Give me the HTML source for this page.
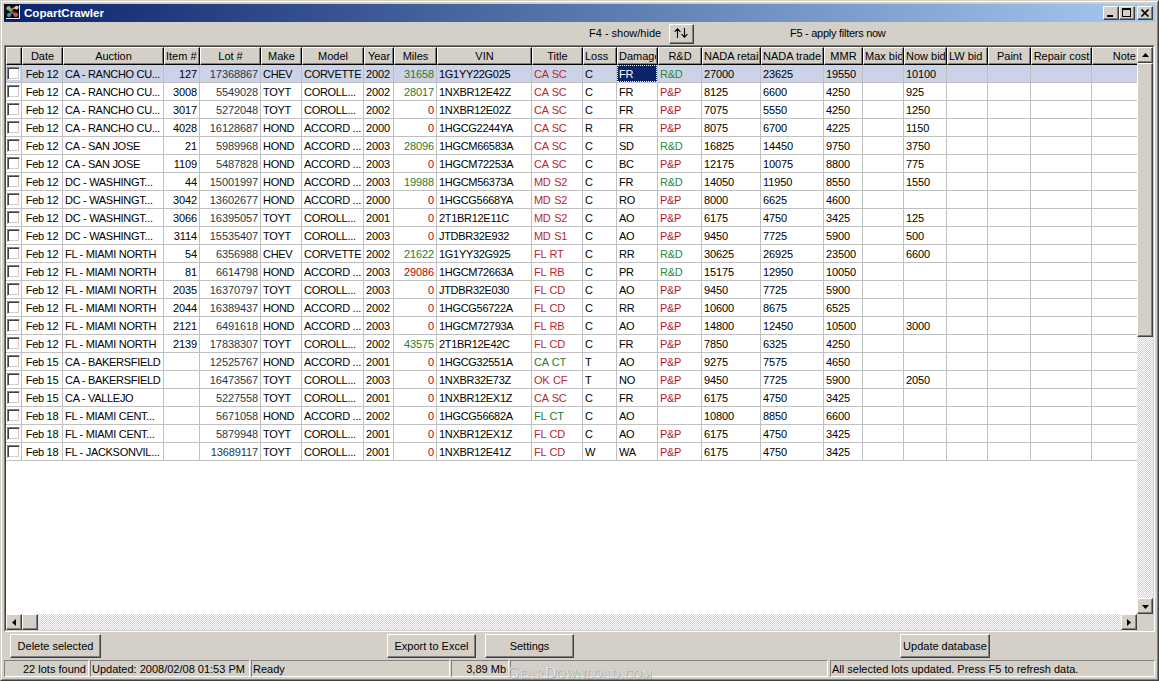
<!DOCTYPE html>
<html><head><meta charset="utf-8"><style>
*{margin:0;padding:0;box-sizing:border-box}
html,body{width:1159px;height:681px;overflow:hidden;background:#d4d0c8;font-family:"Liberation Sans",sans-serif;font-size:11px;color:#000}
.a{position:absolute}
.t{position:absolute;white-space:pre;line-height:17px;height:17px;overflow:hidden}
.wm{filter:none}
.g{letter-spacing:-0.3px}
.n{letter-spacing:-0.1px}
.hl{position:absolute;background:#c0c0c0}
.btn{position:absolute;background:#d4d0c8;border-top:1px solid #fff;border-left:1px solid #fff;border-right:1px solid #404040;border-bottom:1px solid #404040;box-shadow:inset -1px -1px 0 #808080}
.pnl{position:absolute;border-top:1px solid #808080;border-left:1px solid #808080;border-right:1px solid #fff;border-bottom:1px solid #fff}
.cb{position:absolute;width:13px;height:13px;background:#fff;border-top:1px solid #808080;border-left:1px solid #808080;border-right:1px solid #fff;border-bottom:1px solid #fff;box-shadow:inset 1px 1px 0 #404040, inset -1px -1px 0 #d4d0c8}
.dither{background-color:#fff;background-image:linear-gradient(45deg,#d4d0c8 25%,transparent 25%,transparent 75%,#d4d0c8 75%),linear-gradient(45deg,#d4d0c8 25%,transparent 25%,transparent 75%,#d4d0c8 75%);background-size:2px 2px;background-position:0 0,1px 1px}
</style></head><body>
<svg width="0" height="0" style="position:absolute"><filter id="crisp" x="0" y="0" width="100%" height="100%" color-interpolation-filters="sRGB"><feComponentTransfer><feFuncA type="discrete" tableValues="0 1 1 1"/></feComponentTransfer></filter></svg>

<div class="a" style="left:0;top:0;width:1159px;height:681px;border-top:1px solid #d4d0c8;border-left:1px solid #d4d0c8;border-right:1px solid #404040;border-bottom:1px solid #404040"></div>
<div class="a" style="left:1px;top:1px;width:1157px;height:679px;border-top:1px solid #fff;border-left:1px solid #fff;border-right:1px solid #808080;border-bottom:1px solid #808080"></div>
<div class="a" style="left:4px;top:4px;width:1151px;height:18px;background:linear-gradient(to right,#0a246a,#a6caf0)"></div>
<svg class="a" style="left:4px;top:4px" width="16" height="16" viewBox="0 0 16 16">
<rect x="0" y="0" width="16" height="16" fill="#0c1238"/>
<rect x="2" y="1" width="13" height="13" fill="#0a0a14"/>
<path d="M4.6 4.2 L8.3 8.2" stroke="#4a9a3a" stroke-width="2.2" stroke-linecap="round"/>
<path d="M8.3 8.2 L4.8 11" stroke="#3a7a9a" stroke-width="2.2" stroke-linecap="round"/>
<path d="M8.3 8.2 L11.6 10.8" stroke="#b04838" stroke-width="2.2" stroke-linecap="round"/>
<path d="M6.2 6.6 Q9.5 3.5 12.4 4" stroke="#d8904a" stroke-width="1.8" fill="none" stroke-linecap="round"/>
<circle cx="4.6" cy="4.2" r="2.2" fill="#80c070"/>
<circle cx="12.6" cy="3.6" r="1.9" fill="#e8cdb0"/>
<circle cx="5" cy="11" r="2.1" fill="#4a98b8"/>
<circle cx="11.8" cy="10.8" r="2.3" fill="#c86050"/>
<path d="M2 14.5 H15.5 V1" stroke="#f4f0ff" stroke-width="1" fill="none"/>
</svg>
<div class="t" style="left:24px;top:4px;height:18px;line-height:18px;color:#fff;font-weight:bold;font-size:11.6px">CopartCrawler</div>
<div class="btn" style="left:1103px;top:6px;width:16px;height:14px"><div class="a" style="left:3px;top:8px;width:6px;height:2px;background:#000"></div></div>
<div class="btn" style="left:1119px;top:6px;width:16px;height:14px"><div class="a" style="left:2px;top:1px;width:9px;height:9px;border:1px solid #000;border-top-width:2px"></div></div>
<div class="btn" style="left:1137px;top:6px;width:16px;height:14px"><svg class="a" style="left:3px;top:2px" width="9" height="8" viewBox="0 0 9 8"><path d="M0.5 0.5 L7.5 7.5 M7.5 0.5 L0.5 7.5" stroke="#000" stroke-width="1.6"/></svg></div>
<div class="t" style="left:589px;top:25px">F4 - show/hide</div>
<div class="btn" style="left:669px;top:24px;width:25px;height:20px"><svg class="a" style="left:4px;top:3px" width="15" height="11" viewBox="0 0 15 11"><path d="M3.5 10 V0.8 M0.6 3.8 L3.5 0.9 L6.4 3.8 M10.5 0 V9.2 M7.6 6.2 L10.5 9.1 L13.4 6.2" stroke="#000" stroke-width="1.1" fill="none"/></svg></div>
<div class="t" style="left:790px;top:25px;letter-spacing:-0.27px">F5 - apply filters now</div>
<div class="a" style="left:4px;top:45px;width:1151px;height:587px;border-top:1px solid #808080;border-left:1px solid #808080;border-right:1px solid #fff;border-bottom:1px solid #fff"></div>
<div class="a" style="left:5px;top:46px;width:1149px;height:585px;background:#fff;border-top:1px solid #404040;border-left:1px solid #404040;border-right:1px solid #d4d0c8;border-bottom:1px solid #d4d0c8;overflow:hidden">
<div class="a" style="left:0px;top:0px;width:16px;height:18px;background:#d4d0c8;border-top:1px solid #fff;border-left:1px solid #fff;border-right:1px solid #000;border-bottom:1px solid #000;box-shadow:inset -1px -1px 0 #808080"></div>
<div class="a" style="left:16px;top:0px;width:41px;height:18px;background:#d4d0c8;border-top:1px solid #fff;border-left:1px solid #fff;border-right:1px solid #000;border-bottom:1px solid #000;box-shadow:inset -1px -1px 0 #808080"></div>
<div class="t" style="left:16px;top:1px;width:41px;text-align:center">Date</div>
<div class="a" style="left:57px;top:0px;width:101px;height:18px;background:#d4d0c8;border-top:1px solid #fff;border-left:1px solid #fff;border-right:1px solid #000;border-bottom:1px solid #000;box-shadow:inset -1px -1px 0 #808080"></div>
<div class="t" style="left:57px;top:1px;width:101px;text-align:center">Auction</div>
<div class="a" style="left:158px;top:0px;width:36px;height:18px;background:#d4d0c8;border-top:1px solid #fff;border-left:1px solid #fff;border-right:1px solid #000;border-bottom:1px solid #000;box-shadow:inset -1px -1px 0 #808080"></div>
<div class="t" style="left:160px;top:1px;width:32px">Item #</div>
<div class="a" style="left:194px;top:0px;width:61px;height:18px;background:#d4d0c8;border-top:1px solid #fff;border-left:1px solid #fff;border-right:1px solid #000;border-bottom:1px solid #000;box-shadow:inset -1px -1px 0 #808080"></div>
<div class="t" style="left:194px;top:1px;width:61px;text-align:center">Lot #</div>
<div class="a" style="left:255px;top:0px;width:41px;height:18px;background:#d4d0c8;border-top:1px solid #fff;border-left:1px solid #fff;border-right:1px solid #000;border-bottom:1px solid #000;box-shadow:inset -1px -1px 0 #808080"></div>
<div class="t" style="left:255px;top:1px;width:41px;text-align:center">Make</div>
<div class="a" style="left:296px;top:0px;width:62px;height:18px;background:#d4d0c8;border-top:1px solid #fff;border-left:1px solid #fff;border-right:1px solid #000;border-bottom:1px solid #000;box-shadow:inset -1px -1px 0 #808080"></div>
<div class="t" style="left:296px;top:1px;width:62px;text-align:center">Model</div>
<div class="a" style="left:358px;top:0px;width:30px;height:18px;background:#d4d0c8;border-top:1px solid #fff;border-left:1px solid #fff;border-right:1px solid #000;border-bottom:1px solid #000;box-shadow:inset -1px -1px 0 #808080"></div>
<div class="t" style="left:358px;top:1px;width:30px;text-align:center">Year</div>
<div class="a" style="left:388px;top:0px;width:43px;height:18px;background:#d4d0c8;border-top:1px solid #fff;border-left:1px solid #fff;border-right:1px solid #000;border-bottom:1px solid #000;box-shadow:inset -1px -1px 0 #808080"></div>
<div class="t" style="left:388px;top:1px;width:43px;text-align:center">Miles</div>
<div class="a" style="left:431px;top:0px;width:95px;height:18px;background:#d4d0c8;border-top:1px solid #fff;border-left:1px solid #fff;border-right:1px solid #000;border-bottom:1px solid #000;box-shadow:inset -1px -1px 0 #808080"></div>
<div class="t" style="left:431px;top:1px;width:95px;text-align:center">VIN</div>
<div class="a" style="left:526px;top:0px;width:51px;height:18px;background:#d4d0c8;border-top:1px solid #fff;border-left:1px solid #fff;border-right:1px solid #000;border-bottom:1px solid #000;box-shadow:inset -1px -1px 0 #808080"></div>
<div class="t" style="left:526px;top:1px;width:51px;text-align:center">Title</div>
<div class="a" style="left:577px;top:0px;width:34px;height:18px;background:#d4d0c8;border-top:1px solid #fff;border-left:1px solid #fff;border-right:1px solid #000;border-bottom:1px solid #000;box-shadow:inset -1px -1px 0 #808080"></div>
<div class="t" style="left:579px;top:1px;width:30px">Loss</div>
<div class="a" style="left:611px;top:0px;width:41px;height:18px;background:#d4d0c8;border-top:1px solid #fff;border-left:1px solid #fff;border-right:1px solid #000;border-bottom:1px solid #000;box-shadow:inset -1px -1px 0 #808080"></div>
<div class="t" style="left:613px;top:1px;width:37px">Damage</div>
<div class="a" style="left:652px;top:0px;width:44px;height:18px;background:#d4d0c8;border-top:1px solid #fff;border-left:1px solid #fff;border-right:1px solid #000;border-bottom:1px solid #000;box-shadow:inset -1px -1px 0 #808080"></div>
<div class="t" style="left:652px;top:1px;width:44px;text-align:center">R&amp;D</div>
<div class="a" style="left:696px;top:0px;width:59px;height:18px;background:#d4d0c8;border-top:1px solid #fff;border-left:1px solid #fff;border-right:1px solid #000;border-bottom:1px solid #000;box-shadow:inset -1px -1px 0 #808080"></div>
<div class="t" style="left:698px;top:1px;width:55px">NADA retail</div>
<div class="a" style="left:755px;top:0px;width:63px;height:18px;background:#d4d0c8;border-top:1px solid #fff;border-left:1px solid #fff;border-right:1px solid #000;border-bottom:1px solid #000;box-shadow:inset -1px -1px 0 #808080"></div>
<div class="t" style="left:757px;top:1px;width:59px">NADA trade</div>
<div class="a" style="left:818px;top:0px;width:39px;height:18px;background:#d4d0c8;border-top:1px solid #fff;border-left:1px solid #fff;border-right:1px solid #000;border-bottom:1px solid #000;box-shadow:inset -1px -1px 0 #808080"></div>
<div class="t" style="left:818px;top:1px;width:39px;text-align:center">MMR</div>
<div class="a" style="left:857px;top:0px;width:41px;height:18px;background:#d4d0c8;border-top:1px solid #fff;border-left:1px solid #fff;border-right:1px solid #000;border-bottom:1px solid #000;box-shadow:inset -1px -1px 0 #808080"></div>
<div class="t" style="left:859px;top:1px;width:37px">Max bid</div>
<div class="a" style="left:898px;top:0px;width:43px;height:18px;background:#d4d0c8;border-top:1px solid #fff;border-left:1px solid #fff;border-right:1px solid #000;border-bottom:1px solid #000;box-shadow:inset -1px -1px 0 #808080"></div>
<div class="t" style="left:900px;top:1px;width:39px">Now bid</div>
<div class="a" style="left:941px;top:0px;width:41px;height:18px;background:#d4d0c8;border-top:1px solid #fff;border-left:1px solid #fff;border-right:1px solid #000;border-bottom:1px solid #000;box-shadow:inset -1px -1px 0 #808080"></div>
<div class="t" style="left:943px;top:1px;width:37px">LW bid</div>
<div class="a" style="left:982px;top:0px;width:43px;height:18px;background:#d4d0c8;border-top:1px solid #fff;border-left:1px solid #fff;border-right:1px solid #000;border-bottom:1px solid #000;box-shadow:inset -1px -1px 0 #808080"></div>
<div class="t" style="left:982px;top:1px;width:43px;text-align:center">Paint</div>
<div class="a" style="left:1025px;top:0px;width:61px;height:18px;background:#d4d0c8;border-top:1px solid #fff;border-left:1px solid #fff;border-right:1px solid #000;border-bottom:1px solid #000;box-shadow:inset -1px -1px 0 #808080"></div>
<div class="t" style="left:1025px;top:1px;width:61px;text-align:center">Repair cost</div>
<div class="a" style="left:1086px;top:0px;width:79px;height:18px;background:#d4d0c8;border-top:1px solid #fff;border-left:1px solid #fff;border-right:1px solid #000;border-bottom:1px solid #000;box-shadow:inset -1px -1px 0 #808080"></div>
<div class="t" style="left:1086px;top:1px;width:44px;text-align:right">Note</div>
<div class="a" style="left:0px;top:18px;width:1131px;height:17px;background:#cdd3e6"></div>
<div class="hl" style="left:0px;top:35px;width:1131px;height:1px"></div>
<div class="cb" style="left:1px;top:20px"></div>
<div class="t g" style="left:16px;top:19px;width:40px;text-align:center;">Feb 12</div>
<div class="t g" style="left:59px;top:19px;width:98px;">CA - RANCHO CU...</div>
<div class="t n" style="left:158px;top:19px;width:33px;text-align:right;">127</div>
<div class="t n" style="left:194px;top:19px;width:58px;text-align:right;color:#183c4c;">17368867</div>
<div class="t g" style="left:257px;top:19px;width:38px;">CHEV</div>
<div class="t g" style="left:298px;top:19px;width:59px;">CORVETTE</div>
<div class="t n" style="left:360px;top:19px;width:27px;">2002</div>
<div class="t n" style="left:388px;top:19px;width:40px;text-align:right;color:#287a30;">31658</div>
<div class="t g" style="left:433px;top:19px;width:92px;">1G1YY22G025</div>
<div class="t g" style="left:528px;top:19px;width:48px;color:#b82830;word-spacing:1px;">CA SC</div>
<div class="t g" style="left:579px;top:19px;width:31px;">C</div>
<div class="a" style="left:611px;top:18px;width:40px;height:17px;background:#0a246a;outline:1px dotted #fff;outline-offset:-1px"></div>
<div class="t g" style="left:613px;top:19px;width:38px;color:#fff;">FR</div>
<div class="t g" style="left:654px;top:19px;width:41px;color:#2a8a3a;">R&amp;D</div>
<div class="t n" style="left:698px;top:19px;width:56px;">27000</div>
<div class="t n" style="left:757px;top:19px;width:60px;">23625</div>
<div class="t n" style="left:820px;top:19px;width:36px;">19550</div>
<div class="t n" style="left:900px;top:19px;width:40px;">10100</div>
<div class="hl" style="left:0px;top:53px;width:1131px;height:1px"></div>
<div class="cb" style="left:1px;top:38px"></div>
<div class="t g" style="left:16px;top:37px;width:40px;text-align:center;">Feb 12</div>
<div class="t g" style="left:59px;top:37px;width:98px;">CA - RANCHO CU...</div>
<div class="t n" style="left:158px;top:37px;width:33px;text-align:right;">3008</div>
<div class="t n" style="left:194px;top:37px;width:58px;text-align:right;color:#183c4c;">5549028</div>
<div class="t g" style="left:257px;top:37px;width:38px;">TOYT</div>
<div class="t g" style="left:298px;top:37px;width:59px;">COROLL...</div>
<div class="t n" style="left:360px;top:37px;width:27px;">2002</div>
<div class="t n" style="left:388px;top:37px;width:40px;text-align:right;color:#287a30;">28017</div>
<div class="t g" style="left:433px;top:37px;width:92px;">1NXBR12E42Z</div>
<div class="t g" style="left:528px;top:37px;width:48px;color:#b82830;word-spacing:1px;">CA SC</div>
<div class="t g" style="left:579px;top:37px;width:31px;">C</div>
<div class="t g" style="left:613px;top:37px;width:38px;">FR</div>
<div class="t g" style="left:654px;top:37px;width:41px;color:#b01828;">P&amp;P</div>
<div class="t n" style="left:698px;top:37px;width:56px;">8125</div>
<div class="t n" style="left:757px;top:37px;width:60px;">6600</div>
<div class="t n" style="left:820px;top:37px;width:36px;">4250</div>
<div class="t n" style="left:900px;top:37px;width:40px;">925</div>
<div class="hl" style="left:0px;top:71px;width:1131px;height:1px"></div>
<div class="cb" style="left:1px;top:56px"></div>
<div class="t g" style="left:16px;top:55px;width:40px;text-align:center;">Feb 12</div>
<div class="t g" style="left:59px;top:55px;width:98px;">CA - RANCHO CU...</div>
<div class="t n" style="left:158px;top:55px;width:33px;text-align:right;">3017</div>
<div class="t n" style="left:194px;top:55px;width:58px;text-align:right;color:#183c4c;">5272048</div>
<div class="t g" style="left:257px;top:55px;width:38px;">TOYT</div>
<div class="t g" style="left:298px;top:55px;width:59px;">COROLL...</div>
<div class="t n" style="left:360px;top:55px;width:27px;">2002</div>
<div class="t n" style="left:388px;top:55px;width:40px;text-align:right;color:#c00000;">0</div>
<div class="t g" style="left:433px;top:55px;width:92px;">1NXBR12E02Z</div>
<div class="t g" style="left:528px;top:55px;width:48px;color:#b82830;word-spacing:1px;">CA SC</div>
<div class="t g" style="left:579px;top:55px;width:31px;">C</div>
<div class="t g" style="left:613px;top:55px;width:38px;">FR</div>
<div class="t g" style="left:654px;top:55px;width:41px;color:#b01828;">P&amp;P</div>
<div class="t n" style="left:698px;top:55px;width:56px;">7075</div>
<div class="t n" style="left:757px;top:55px;width:60px;">5550</div>
<div class="t n" style="left:820px;top:55px;width:36px;">4250</div>
<div class="t n" style="left:900px;top:55px;width:40px;">1250</div>
<div class="hl" style="left:0px;top:89px;width:1131px;height:1px"></div>
<div class="cb" style="left:1px;top:74px"></div>
<div class="t g" style="left:16px;top:73px;width:40px;text-align:center;">Feb 12</div>
<div class="t g" style="left:59px;top:73px;width:98px;">CA - RANCHO CU...</div>
<div class="t n" style="left:158px;top:73px;width:33px;text-align:right;">4028</div>
<div class="t n" style="left:194px;top:73px;width:58px;text-align:right;color:#183c4c;">16128687</div>
<div class="t g" style="left:257px;top:73px;width:38px;">HOND</div>
<div class="t g" style="left:298px;top:73px;width:59px;">ACCORD ...</div>
<div class="t n" style="left:360px;top:73px;width:27px;">2000</div>
<div class="t n" style="left:388px;top:73px;width:40px;text-align:right;color:#c00000;">0</div>
<div class="t g" style="left:433px;top:73px;width:92px;">1HGCG2244YA</div>
<div class="t g" style="left:528px;top:73px;width:48px;color:#b82830;word-spacing:1px;">CA SC</div>
<div class="t g" style="left:579px;top:73px;width:31px;">R</div>
<div class="t g" style="left:613px;top:73px;width:38px;">FR</div>
<div class="t g" style="left:654px;top:73px;width:41px;color:#b01828;">P&amp;P</div>
<div class="t n" style="left:698px;top:73px;width:56px;">8075</div>
<div class="t n" style="left:757px;top:73px;width:60px;">6700</div>
<div class="t n" style="left:820px;top:73px;width:36px;">4225</div>
<div class="t n" style="left:900px;top:73px;width:40px;">1150</div>
<div class="hl" style="left:0px;top:107px;width:1131px;height:1px"></div>
<div class="cb" style="left:1px;top:92px"></div>
<div class="t g" style="left:16px;top:91px;width:40px;text-align:center;">Feb 12</div>
<div class="t g" style="left:59px;top:91px;width:98px;">CA - SAN JOSE</div>
<div class="t n" style="left:158px;top:91px;width:33px;text-align:right;">21</div>
<div class="t n" style="left:194px;top:91px;width:58px;text-align:right;color:#183c4c;">5989968</div>
<div class="t g" style="left:257px;top:91px;width:38px;">HOND</div>
<div class="t g" style="left:298px;top:91px;width:59px;">ACCORD ...</div>
<div class="t n" style="left:360px;top:91px;width:27px;">2003</div>
<div class="t n" style="left:388px;top:91px;width:40px;text-align:right;color:#287a30;">28096</div>
<div class="t g" style="left:433px;top:91px;width:92px;">1HGCM66583A</div>
<div class="t g" style="left:528px;top:91px;width:48px;color:#b82830;word-spacing:1px;">CA SC</div>
<div class="t g" style="left:579px;top:91px;width:31px;">C</div>
<div class="t g" style="left:613px;top:91px;width:38px;">SD</div>
<div class="t g" style="left:654px;top:91px;width:41px;color:#2a8a3a;">R&amp;D</div>
<div class="t n" style="left:698px;top:91px;width:56px;">16825</div>
<div class="t n" style="left:757px;top:91px;width:60px;">14450</div>
<div class="t n" style="left:820px;top:91px;width:36px;">9750</div>
<div class="t n" style="left:900px;top:91px;width:40px;">3750</div>
<div class="hl" style="left:0px;top:125px;width:1131px;height:1px"></div>
<div class="cb" style="left:1px;top:110px"></div>
<div class="t g" style="left:16px;top:109px;width:40px;text-align:center;">Feb 12</div>
<div class="t g" style="left:59px;top:109px;width:98px;">CA - SAN JOSE</div>
<div class="t n" style="left:158px;top:109px;width:33px;text-align:right;">1109</div>
<div class="t n" style="left:194px;top:109px;width:58px;text-align:right;color:#183c4c;">5487828</div>
<div class="t g" style="left:257px;top:109px;width:38px;">HOND</div>
<div class="t g" style="left:298px;top:109px;width:59px;">ACCORD ...</div>
<div class="t n" style="left:360px;top:109px;width:27px;">2003</div>
<div class="t n" style="left:388px;top:109px;width:40px;text-align:right;color:#c00000;">0</div>
<div class="t g" style="left:433px;top:109px;width:92px;">1HGCM72253A</div>
<div class="t g" style="left:528px;top:109px;width:48px;color:#b82830;word-spacing:1px;">CA SC</div>
<div class="t g" style="left:579px;top:109px;width:31px;">C</div>
<div class="t g" style="left:613px;top:109px;width:38px;">BC</div>
<div class="t g" style="left:654px;top:109px;width:41px;color:#b01828;">P&amp;P</div>
<div class="t n" style="left:698px;top:109px;width:56px;">12175</div>
<div class="t n" style="left:757px;top:109px;width:60px;">10075</div>
<div class="t n" style="left:820px;top:109px;width:36px;">8800</div>
<div class="t n" style="left:900px;top:109px;width:40px;">775</div>
<div class="hl" style="left:0px;top:143px;width:1131px;height:1px"></div>
<div class="cb" style="left:1px;top:128px"></div>
<div class="t g" style="left:16px;top:127px;width:40px;text-align:center;">Feb 12</div>
<div class="t g" style="left:59px;top:127px;width:98px;">DC - WASHINGT...</div>
<div class="t n" style="left:158px;top:127px;width:33px;text-align:right;">44</div>
<div class="t n" style="left:194px;top:127px;width:58px;text-align:right;color:#183c4c;">15001997</div>
<div class="t g" style="left:257px;top:127px;width:38px;">HOND</div>
<div class="t g" style="left:298px;top:127px;width:59px;">ACCORD ...</div>
<div class="t n" style="left:360px;top:127px;width:27px;">2003</div>
<div class="t n" style="left:388px;top:127px;width:40px;text-align:right;color:#287a30;">19988</div>
<div class="t g" style="left:433px;top:127px;width:92px;">1HGCM56373A</div>
<div class="t g" style="left:528px;top:127px;width:48px;color:#b82830;word-spacing:1px;">MD S2</div>
<div class="t g" style="left:579px;top:127px;width:31px;">C</div>
<div class="t g" style="left:613px;top:127px;width:38px;">FR</div>
<div class="t g" style="left:654px;top:127px;width:41px;color:#2a8a3a;">R&amp;D</div>
<div class="t n" style="left:698px;top:127px;width:56px;">14050</div>
<div class="t n" style="left:757px;top:127px;width:60px;">11950</div>
<div class="t n" style="left:820px;top:127px;width:36px;">8550</div>
<div class="t n" style="left:900px;top:127px;width:40px;">1550</div>
<div class="hl" style="left:0px;top:161px;width:1131px;height:1px"></div>
<div class="cb" style="left:1px;top:146px"></div>
<div class="t g" style="left:16px;top:145px;width:40px;text-align:center;">Feb 12</div>
<div class="t g" style="left:59px;top:145px;width:98px;">DC - WASHINGT...</div>
<div class="t n" style="left:158px;top:145px;width:33px;text-align:right;">3042</div>
<div class="t n" style="left:194px;top:145px;width:58px;text-align:right;color:#183c4c;">13602677</div>
<div class="t g" style="left:257px;top:145px;width:38px;">HOND</div>
<div class="t g" style="left:298px;top:145px;width:59px;">ACCORD ...</div>
<div class="t n" style="left:360px;top:145px;width:27px;">2000</div>
<div class="t n" style="left:388px;top:145px;width:40px;text-align:right;color:#c00000;">0</div>
<div class="t g" style="left:433px;top:145px;width:92px;">1HGCG5668YA</div>
<div class="t g" style="left:528px;top:145px;width:48px;color:#b82830;word-spacing:1px;">MD S2</div>
<div class="t g" style="left:579px;top:145px;width:31px;">C</div>
<div class="t g" style="left:613px;top:145px;width:38px;">RO</div>
<div class="t g" style="left:654px;top:145px;width:41px;color:#b01828;">P&amp;P</div>
<div class="t n" style="left:698px;top:145px;width:56px;">8000</div>
<div class="t n" style="left:757px;top:145px;width:60px;">6625</div>
<div class="t n" style="left:820px;top:145px;width:36px;">4600</div>
<div class="hl" style="left:0px;top:179px;width:1131px;height:1px"></div>
<div class="cb" style="left:1px;top:164px"></div>
<div class="t g" style="left:16px;top:163px;width:40px;text-align:center;">Feb 12</div>
<div class="t g" style="left:59px;top:163px;width:98px;">DC - WASHINGT...</div>
<div class="t n" style="left:158px;top:163px;width:33px;text-align:right;">3066</div>
<div class="t n" style="left:194px;top:163px;width:58px;text-align:right;color:#183c4c;">16395057</div>
<div class="t g" style="left:257px;top:163px;width:38px;">TOYT</div>
<div class="t g" style="left:298px;top:163px;width:59px;">COROLL...</div>
<div class="t n" style="left:360px;top:163px;width:27px;">2001</div>
<div class="t n" style="left:388px;top:163px;width:40px;text-align:right;color:#c00000;">0</div>
<div class="t g" style="left:433px;top:163px;width:92px;">2T1BR12E11C</div>
<div class="t g" style="left:528px;top:163px;width:48px;color:#b82830;word-spacing:1px;">MD S2</div>
<div class="t g" style="left:579px;top:163px;width:31px;">C</div>
<div class="t g" style="left:613px;top:163px;width:38px;">AO</div>
<div class="t g" style="left:654px;top:163px;width:41px;color:#b01828;">P&amp;P</div>
<div class="t n" style="left:698px;top:163px;width:56px;">6175</div>
<div class="t n" style="left:757px;top:163px;width:60px;">4750</div>
<div class="t n" style="left:820px;top:163px;width:36px;">3425</div>
<div class="t n" style="left:900px;top:163px;width:40px;">125</div>
<div class="hl" style="left:0px;top:197px;width:1131px;height:1px"></div>
<div class="cb" style="left:1px;top:182px"></div>
<div class="t g" style="left:16px;top:181px;width:40px;text-align:center;">Feb 12</div>
<div class="t g" style="left:59px;top:181px;width:98px;">DC - WASHINGT...</div>
<div class="t n" style="left:158px;top:181px;width:33px;text-align:right;">3114</div>
<div class="t n" style="left:194px;top:181px;width:58px;text-align:right;color:#183c4c;">15535407</div>
<div class="t g" style="left:257px;top:181px;width:38px;">TOYT</div>
<div class="t g" style="left:298px;top:181px;width:59px;">COROLL...</div>
<div class="t n" style="left:360px;top:181px;width:27px;">2003</div>
<div class="t n" style="left:388px;top:181px;width:40px;text-align:right;color:#c00000;">0</div>
<div class="t g" style="left:433px;top:181px;width:92px;">JTDBR32E932</div>
<div class="t g" style="left:528px;top:181px;width:48px;color:#b82830;word-spacing:1px;">MD S1</div>
<div class="t g" style="left:579px;top:181px;width:31px;">C</div>
<div class="t g" style="left:613px;top:181px;width:38px;">AO</div>
<div class="t g" style="left:654px;top:181px;width:41px;color:#b01828;">P&amp;P</div>
<div class="t n" style="left:698px;top:181px;width:56px;">9450</div>
<div class="t n" style="left:757px;top:181px;width:60px;">7725</div>
<div class="t n" style="left:820px;top:181px;width:36px;">5900</div>
<div class="t n" style="left:900px;top:181px;width:40px;">500</div>
<div class="hl" style="left:0px;top:215px;width:1131px;height:1px"></div>
<div class="cb" style="left:1px;top:200px"></div>
<div class="t g" style="left:16px;top:199px;width:40px;text-align:center;">Feb 12</div>
<div class="t g" style="left:59px;top:199px;width:98px;">FL - MIAMI NORTH</div>
<div class="t n" style="left:158px;top:199px;width:33px;text-align:right;">54</div>
<div class="t n" style="left:194px;top:199px;width:58px;text-align:right;color:#183c4c;">6356988</div>
<div class="t g" style="left:257px;top:199px;width:38px;">CHEV</div>
<div class="t g" style="left:298px;top:199px;width:59px;">CORVETTE</div>
<div class="t n" style="left:360px;top:199px;width:27px;">2002</div>
<div class="t n" style="left:388px;top:199px;width:40px;text-align:right;color:#287a30;">21622</div>
<div class="t g" style="left:433px;top:199px;width:92px;">1G1YY32G925</div>
<div class="t g" style="left:528px;top:199px;width:48px;color:#b82830;word-spacing:1px;">FL RT</div>
<div class="t g" style="left:579px;top:199px;width:31px;">C</div>
<div class="t g" style="left:613px;top:199px;width:38px;">RR</div>
<div class="t g" style="left:654px;top:199px;width:41px;color:#2a8a3a;">R&amp;D</div>
<div class="t n" style="left:698px;top:199px;width:56px;">30625</div>
<div class="t n" style="left:757px;top:199px;width:60px;">26925</div>
<div class="t n" style="left:820px;top:199px;width:36px;">23500</div>
<div class="t n" style="left:900px;top:199px;width:40px;">6600</div>
<div class="hl" style="left:0px;top:233px;width:1131px;height:1px"></div>
<div class="cb" style="left:1px;top:218px"></div>
<div class="t g" style="left:16px;top:217px;width:40px;text-align:center;">Feb 12</div>
<div class="t g" style="left:59px;top:217px;width:98px;">FL - MIAMI NORTH</div>
<div class="t n" style="left:158px;top:217px;width:33px;text-align:right;">81</div>
<div class="t n" style="left:194px;top:217px;width:58px;text-align:right;color:#183c4c;">6614798</div>
<div class="t g" style="left:257px;top:217px;width:38px;">HOND</div>
<div class="t g" style="left:298px;top:217px;width:59px;">ACCORD ...</div>
<div class="t n" style="left:360px;top:217px;width:27px;">2003</div>
<div class="t n" style="left:388px;top:217px;width:40px;text-align:right;color:#c00000;">29086</div>
<div class="t g" style="left:433px;top:217px;width:92px;">1HGCM72663A</div>
<div class="t g" style="left:528px;top:217px;width:48px;color:#b82830;word-spacing:1px;">FL RB</div>
<div class="t g" style="left:579px;top:217px;width:31px;">C</div>
<div class="t g" style="left:613px;top:217px;width:38px;">PR</div>
<div class="t g" style="left:654px;top:217px;width:41px;color:#2a8a3a;">R&amp;D</div>
<div class="t n" style="left:698px;top:217px;width:56px;">15175</div>
<div class="t n" style="left:757px;top:217px;width:60px;">12950</div>
<div class="t n" style="left:820px;top:217px;width:36px;">10050</div>
<div class="hl" style="left:0px;top:251px;width:1131px;height:1px"></div>
<div class="cb" style="left:1px;top:236px"></div>
<div class="t g" style="left:16px;top:235px;width:40px;text-align:center;">Feb 12</div>
<div class="t g" style="left:59px;top:235px;width:98px;">FL - MIAMI NORTH</div>
<div class="t n" style="left:158px;top:235px;width:33px;text-align:right;">2035</div>
<div class="t n" style="left:194px;top:235px;width:58px;text-align:right;color:#183c4c;">16370797</div>
<div class="t g" style="left:257px;top:235px;width:38px;">TOYT</div>
<div class="t g" style="left:298px;top:235px;width:59px;">COROLL...</div>
<div class="t n" style="left:360px;top:235px;width:27px;">2003</div>
<div class="t n" style="left:388px;top:235px;width:40px;text-align:right;color:#c00000;">0</div>
<div class="t g" style="left:433px;top:235px;width:92px;">JTDBR32E030</div>
<div class="t g" style="left:528px;top:235px;width:48px;color:#b82830;word-spacing:1px;">FL CD</div>
<div class="t g" style="left:579px;top:235px;width:31px;">C</div>
<div class="t g" style="left:613px;top:235px;width:38px;">AO</div>
<div class="t g" style="left:654px;top:235px;width:41px;color:#b01828;">P&amp;P</div>
<div class="t n" style="left:698px;top:235px;width:56px;">9450</div>
<div class="t n" style="left:757px;top:235px;width:60px;">7725</div>
<div class="t n" style="left:820px;top:235px;width:36px;">5900</div>
<div class="hl" style="left:0px;top:269px;width:1131px;height:1px"></div>
<div class="cb" style="left:1px;top:254px"></div>
<div class="t g" style="left:16px;top:253px;width:40px;text-align:center;">Feb 12</div>
<div class="t g" style="left:59px;top:253px;width:98px;">FL - MIAMI NORTH</div>
<div class="t n" style="left:158px;top:253px;width:33px;text-align:right;">2044</div>
<div class="t n" style="left:194px;top:253px;width:58px;text-align:right;color:#183c4c;">16389437</div>
<div class="t g" style="left:257px;top:253px;width:38px;">HOND</div>
<div class="t g" style="left:298px;top:253px;width:59px;">ACCORD ...</div>
<div class="t n" style="left:360px;top:253px;width:27px;">2002</div>
<div class="t n" style="left:388px;top:253px;width:40px;text-align:right;color:#c00000;">0</div>
<div class="t g" style="left:433px;top:253px;width:92px;">1HGCG56722A</div>
<div class="t g" style="left:528px;top:253px;width:48px;color:#b82830;word-spacing:1px;">FL CD</div>
<div class="t g" style="left:579px;top:253px;width:31px;">C</div>
<div class="t g" style="left:613px;top:253px;width:38px;">RR</div>
<div class="t g" style="left:654px;top:253px;width:41px;color:#b01828;">P&amp;P</div>
<div class="t n" style="left:698px;top:253px;width:56px;">10600</div>
<div class="t n" style="left:757px;top:253px;width:60px;">8675</div>
<div class="t n" style="left:820px;top:253px;width:36px;">6525</div>
<div class="hl" style="left:0px;top:287px;width:1131px;height:1px"></div>
<div class="cb" style="left:1px;top:272px"></div>
<div class="t g" style="left:16px;top:271px;width:40px;text-align:center;">Feb 12</div>
<div class="t g" style="left:59px;top:271px;width:98px;">FL - MIAMI NORTH</div>
<div class="t n" style="left:158px;top:271px;width:33px;text-align:right;">2121</div>
<div class="t n" style="left:194px;top:271px;width:58px;text-align:right;color:#183c4c;">6491618</div>
<div class="t g" style="left:257px;top:271px;width:38px;">HOND</div>
<div class="t g" style="left:298px;top:271px;width:59px;">ACCORD ...</div>
<div class="t n" style="left:360px;top:271px;width:27px;">2003</div>
<div class="t n" style="left:388px;top:271px;width:40px;text-align:right;color:#c00000;">0</div>
<div class="t g" style="left:433px;top:271px;width:92px;">1HGCM72793A</div>
<div class="t g" style="left:528px;top:271px;width:48px;color:#b82830;word-spacing:1px;">FL RB</div>
<div class="t g" style="left:579px;top:271px;width:31px;">C</div>
<div class="t g" style="left:613px;top:271px;width:38px;">AO</div>
<div class="t g" style="left:654px;top:271px;width:41px;color:#b01828;">P&amp;P</div>
<div class="t n" style="left:698px;top:271px;width:56px;">14800</div>
<div class="t n" style="left:757px;top:271px;width:60px;">12450</div>
<div class="t n" style="left:820px;top:271px;width:36px;">10500</div>
<div class="t n" style="left:900px;top:271px;width:40px;">3000</div>
<div class="hl" style="left:0px;top:305px;width:1131px;height:1px"></div>
<div class="cb" style="left:1px;top:290px"></div>
<div class="t g" style="left:16px;top:289px;width:40px;text-align:center;">Feb 12</div>
<div class="t g" style="left:59px;top:289px;width:98px;">FL - MIAMI NORTH</div>
<div class="t n" style="left:158px;top:289px;width:33px;text-align:right;">2139</div>
<div class="t n" style="left:194px;top:289px;width:58px;text-align:right;color:#183c4c;">17838307</div>
<div class="t g" style="left:257px;top:289px;width:38px;">TOYT</div>
<div class="t g" style="left:298px;top:289px;width:59px;">COROLL...</div>
<div class="t n" style="left:360px;top:289px;width:27px;">2002</div>
<div class="t n" style="left:388px;top:289px;width:40px;text-align:right;color:#287a30;">43575</div>
<div class="t g" style="left:433px;top:289px;width:92px;">2T1BR12E42C</div>
<div class="t g" style="left:528px;top:289px;width:48px;color:#b82830;word-spacing:1px;">FL CD</div>
<div class="t g" style="left:579px;top:289px;width:31px;">C</div>
<div class="t g" style="left:613px;top:289px;width:38px;">FR</div>
<div class="t g" style="left:654px;top:289px;width:41px;color:#b01828;">P&amp;P</div>
<div class="t n" style="left:698px;top:289px;width:56px;">7850</div>
<div class="t n" style="left:757px;top:289px;width:60px;">6325</div>
<div class="t n" style="left:820px;top:289px;width:36px;">4250</div>
<div class="hl" style="left:0px;top:323px;width:1131px;height:1px"></div>
<div class="cb" style="left:1px;top:308px"></div>
<div class="t g" style="left:16px;top:307px;width:40px;text-align:center;">Feb 15</div>
<div class="t g" style="left:59px;top:307px;width:98px;">CA - BAKERSFIELD</div>
<div class="t n" style="left:194px;top:307px;width:58px;text-align:right;color:#183c4c;">12525767</div>
<div class="t g" style="left:257px;top:307px;width:38px;">HOND</div>
<div class="t g" style="left:298px;top:307px;width:59px;">ACCORD ...</div>
<div class="t n" style="left:360px;top:307px;width:27px;">2001</div>
<div class="t n" style="left:388px;top:307px;width:40px;text-align:right;color:#c00000;">0</div>
<div class="t g" style="left:433px;top:307px;width:92px;">1HGCG32551A</div>
<div class="t g" style="left:528px;top:307px;width:48px;color:#2a7a30;word-spacing:1px;">CA CT</div>
<div class="t g" style="left:579px;top:307px;width:31px;">T</div>
<div class="t g" style="left:613px;top:307px;width:38px;">AO</div>
<div class="t g" style="left:654px;top:307px;width:41px;color:#b01828;">P&amp;P</div>
<div class="t n" style="left:698px;top:307px;width:56px;">9275</div>
<div class="t n" style="left:757px;top:307px;width:60px;">7575</div>
<div class="t n" style="left:820px;top:307px;width:36px;">4650</div>
<div class="hl" style="left:0px;top:341px;width:1131px;height:1px"></div>
<div class="cb" style="left:1px;top:326px"></div>
<div class="t g" style="left:16px;top:325px;width:40px;text-align:center;">Feb 15</div>
<div class="t g" style="left:59px;top:325px;width:98px;">CA - BAKERSFIELD</div>
<div class="t n" style="left:194px;top:325px;width:58px;text-align:right;color:#183c4c;">16473567</div>
<div class="t g" style="left:257px;top:325px;width:38px;">TOYT</div>
<div class="t g" style="left:298px;top:325px;width:59px;">COROLL...</div>
<div class="t n" style="left:360px;top:325px;width:27px;">2003</div>
<div class="t n" style="left:388px;top:325px;width:40px;text-align:right;color:#c00000;">0</div>
<div class="t g" style="left:433px;top:325px;width:92px;">1NXBR32E73Z</div>
<div class="t g" style="left:528px;top:325px;width:48px;color:#b82830;word-spacing:1px;">OK CF</div>
<div class="t g" style="left:579px;top:325px;width:31px;">T</div>
<div class="t g" style="left:613px;top:325px;width:38px;">NO</div>
<div class="t g" style="left:654px;top:325px;width:41px;color:#b01828;">P&amp;P</div>
<div class="t n" style="left:698px;top:325px;width:56px;">9450</div>
<div class="t n" style="left:757px;top:325px;width:60px;">7725</div>
<div class="t n" style="left:820px;top:325px;width:36px;">5900</div>
<div class="t n" style="left:900px;top:325px;width:40px;">2050</div>
<div class="hl" style="left:0px;top:359px;width:1131px;height:1px"></div>
<div class="cb" style="left:1px;top:344px"></div>
<div class="t g" style="left:16px;top:343px;width:40px;text-align:center;">Feb 15</div>
<div class="t g" style="left:59px;top:343px;width:98px;">CA - VALLEJO</div>
<div class="t n" style="left:194px;top:343px;width:58px;text-align:right;color:#183c4c;">5227558</div>
<div class="t g" style="left:257px;top:343px;width:38px;">TOYT</div>
<div class="t g" style="left:298px;top:343px;width:59px;">COROLL...</div>
<div class="t n" style="left:360px;top:343px;width:27px;">2001</div>
<div class="t n" style="left:388px;top:343px;width:40px;text-align:right;color:#c00000;">0</div>
<div class="t g" style="left:433px;top:343px;width:92px;">1NXBR12EX1Z</div>
<div class="t g" style="left:528px;top:343px;width:48px;color:#b82830;word-spacing:1px;">CA SC</div>
<div class="t g" style="left:579px;top:343px;width:31px;">C</div>
<div class="t g" style="left:613px;top:343px;width:38px;">FR</div>
<div class="t g" style="left:654px;top:343px;width:41px;color:#b01828;">P&amp;P</div>
<div class="t n" style="left:698px;top:343px;width:56px;">6175</div>
<div class="t n" style="left:757px;top:343px;width:60px;">4750</div>
<div class="t n" style="left:820px;top:343px;width:36px;">3425</div>
<div class="hl" style="left:0px;top:377px;width:1131px;height:1px"></div>
<div class="cb" style="left:1px;top:362px"></div>
<div class="t g" style="left:16px;top:361px;width:40px;text-align:center;">Feb 18</div>
<div class="t g" style="left:59px;top:361px;width:98px;">FL - MIAMI CENT...</div>
<div class="t n" style="left:194px;top:361px;width:58px;text-align:right;color:#183c4c;">5671058</div>
<div class="t g" style="left:257px;top:361px;width:38px;">HOND</div>
<div class="t g" style="left:298px;top:361px;width:59px;">ACCORD ...</div>
<div class="t n" style="left:360px;top:361px;width:27px;">2002</div>
<div class="t n" style="left:388px;top:361px;width:40px;text-align:right;color:#c00000;">0</div>
<div class="t g" style="left:433px;top:361px;width:92px;">1HGCG56682A</div>
<div class="t g" style="left:528px;top:361px;width:48px;color:#2a7a30;word-spacing:1px;">FL CT</div>
<div class="t g" style="left:579px;top:361px;width:31px;">C</div>
<div class="t g" style="left:613px;top:361px;width:38px;">AO</div>
<div class="t n" style="left:698px;top:361px;width:56px;">10800</div>
<div class="t n" style="left:757px;top:361px;width:60px;">8850</div>
<div class="t n" style="left:820px;top:361px;width:36px;">6600</div>
<div class="hl" style="left:0px;top:395px;width:1131px;height:1px"></div>
<div class="cb" style="left:1px;top:380px"></div>
<div class="t g" style="left:16px;top:379px;width:40px;text-align:center;">Feb 18</div>
<div class="t g" style="left:59px;top:379px;width:98px;">FL - MIAMI CENT...</div>
<div class="t n" style="left:194px;top:379px;width:58px;text-align:right;color:#183c4c;">5879948</div>
<div class="t g" style="left:257px;top:379px;width:38px;">TOYT</div>
<div class="t g" style="left:298px;top:379px;width:59px;">COROLL...</div>
<div class="t n" style="left:360px;top:379px;width:27px;">2001</div>
<div class="t n" style="left:388px;top:379px;width:40px;text-align:right;color:#c00000;">0</div>
<div class="t g" style="left:433px;top:379px;width:92px;">1NXBR12EX1Z</div>
<div class="t g" style="left:528px;top:379px;width:48px;color:#b82830;word-spacing:1px;">FL CD</div>
<div class="t g" style="left:579px;top:379px;width:31px;">C</div>
<div class="t g" style="left:613px;top:379px;width:38px;">AO</div>
<div class="t g" style="left:654px;top:379px;width:41px;color:#b01828;">P&amp;P</div>
<div class="t n" style="left:698px;top:379px;width:56px;">6175</div>
<div class="t n" style="left:757px;top:379px;width:60px;">4750</div>
<div class="t n" style="left:820px;top:379px;width:36px;">3425</div>
<div class="hl" style="left:0px;top:413px;width:1131px;height:1px"></div>
<div class="cb" style="left:1px;top:398px"></div>
<div class="t g" style="left:16px;top:397px;width:40px;text-align:center;">Feb 18</div>
<div class="t g" style="left:59px;top:397px;width:98px;">FL - JACKSONVIL...</div>
<div class="t n" style="left:194px;top:397px;width:58px;text-align:right;color:#183c4c;">13689117</div>
<div class="t g" style="left:257px;top:397px;width:38px;">TOYT</div>
<div class="t g" style="left:298px;top:397px;width:59px;">COROLL...</div>
<div class="t n" style="left:360px;top:397px;width:27px;">2001</div>
<div class="t n" style="left:388px;top:397px;width:40px;text-align:right;color:#c00000;">0</div>
<div class="t g" style="left:433px;top:397px;width:92px;">1NXBR12E41Z</div>
<div class="t g" style="left:528px;top:397px;width:48px;color:#b82830;word-spacing:1px;">FL CD</div>
<div class="t g" style="left:579px;top:397px;width:31px;">W</div>
<div class="t g" style="left:613px;top:397px;width:38px;">WA</div>
<div class="t g" style="left:654px;top:397px;width:41px;color:#b01828;">P&amp;P</div>
<div class="t n" style="left:698px;top:397px;width:56px;">6175</div>
<div class="t n" style="left:757px;top:397px;width:60px;">4750</div>
<div class="t n" style="left:820px;top:397px;width:36px;">3425</div>
<div class="hl" style="left:15px;top:18px;width:1px;height:396px"></div>
<div class="hl" style="left:56px;top:18px;width:1px;height:396px"></div>
<div class="hl" style="left:157px;top:18px;width:1px;height:396px"></div>
<div class="hl" style="left:193px;top:18px;width:1px;height:396px"></div>
<div class="hl" style="left:254px;top:18px;width:1px;height:396px"></div>
<div class="hl" style="left:295px;top:18px;width:1px;height:396px"></div>
<div class="hl" style="left:357px;top:18px;width:1px;height:396px"></div>
<div class="hl" style="left:387px;top:18px;width:1px;height:396px"></div>
<div class="hl" style="left:430px;top:18px;width:1px;height:396px"></div>
<div class="hl" style="left:525px;top:18px;width:1px;height:396px"></div>
<div class="hl" style="left:576px;top:18px;width:1px;height:396px"></div>
<div class="hl" style="left:610px;top:18px;width:1px;height:396px"></div>
<div class="hl" style="left:651px;top:18px;width:1px;height:396px"></div>
<div class="hl" style="left:695px;top:18px;width:1px;height:396px"></div>
<div class="hl" style="left:754px;top:18px;width:1px;height:396px"></div>
<div class="hl" style="left:817px;top:18px;width:1px;height:396px"></div>
<div class="hl" style="left:856px;top:18px;width:1px;height:396px"></div>
<div class="hl" style="left:897px;top:18px;width:1px;height:396px"></div>
<div class="hl" style="left:940px;top:18px;width:1px;height:396px"></div>
<div class="hl" style="left:981px;top:18px;width:1px;height:396px"></div>
<div class="hl" style="left:1024px;top:18px;width:1px;height:396px"></div>
<div class="hl" style="left:1085px;top:18px;width:1px;height:396px"></div>
<div class="a dither" style="left:1131px;top:0px;width:16px;height:567px"></div>
<div class="btn" style="left:1131px;top:0px;width:16px;height:16px"><svg class="a" style="left:4px;top:5px" width="7" height="4"><path d="M3.5 0 L7 4 L0 4Z" fill="#000"/></svg></div>
<div class="btn" style="left:1131px;top:16px;width:16px;height:274px"></div>
<div class="btn" style="left:1131px;top:551px;width:16px;height:16px"><svg class="a" style="left:4px;top:6px" width="7" height="4"><path d="M0 0 L7 0 L3.5 4Z" fill="#000"/></svg></div>
<div class="a dither" style="left:0px;top:567px;width:1131px;height:16px"></div>
<div class="btn" style="left:0px;top:567px;width:16px;height:16px"><svg class="a" style="left:5px;top:4px" width="4" height="7"><path d="M4 0 L4 7 L0 3.5Z" fill="#000"/></svg></div>
<div class="btn" style="left:16px;top:567px;width:16px;height:16px"></div>
<div class="btn" style="left:1115px;top:567px;width:16px;height:16px"><svg class="a" style="left:5px;top:4px" width="4" height="7"><path d="M0 0 L0 7 L4 3.5Z" fill="#000"/></svg></div>
<div class="a" style="left:1131px;top:567px;width:16px;height:16px;background:#d4d0c8"></div>
</div>
<div class="btn" style="left:10px;top:634px;width:91px;height:24px"><div class="t" style="left:0;top:0;width:89px;height:22px;line-height:22px;text-align:center">Delete selected</div></div>
<div class="btn" style="left:387px;top:634px;width:89px;height:24px"><div class="t" style="left:0;top:0;width:87px;height:22px;line-height:22px;text-align:center">Export to Excel</div></div>
<div class="btn" style="left:485px;top:634px;width:89px;height:24px"><div class="t" style="left:0;top:0;width:87px;height:22px;line-height:22px;text-align:center">Settings</div></div>
<div class="btn" style="left:900px;top:634px;width:90px;height:24px"><div class="t" style="left:0;top:0;width:88px;height:22px;line-height:22px;text-align:center">Update database</div></div>
<div class="pnl" style="left:4px;top:660px;width:85px;height:17px"><div class="t" style="left:0;top:1px;width:81px;line-height:15px;height:15px;text-align:right">22 lots found</div></div>
<div class="pnl" style="left:90px;top:660px;width:160px;height:17px"><div class="t" style="left:1px;top:1px;line-height:15px;height:15px">Updated: 2008/02/08 01:53 PM</div></div>
<div class="pnl" style="left:251px;top:660px;width:199px;height:17px"><div class="t" style="left:1px;top:1px;line-height:15px;height:15px">Ready</div></div>
<div class="pnl" style="left:451px;top:660px;width:58px;height:17px"><div class="t" style="left:0;top:1px;width:54px;line-height:15px;height:15px;text-align:right">3,89 Mb</div></div>
<div class="pnl" style="left:510px;top:660px;width:318px;height:17px"><div class="t" style="left:1px;top:1px;line-height:15px;height:15px"></div></div>
<div class="pnl" style="left:830px;top:660px;width:325px;height:17px"><div class="t" style="left:1px;top:1px;line-height:15px;height:15px">All selected lots updated. Press F5 to refresh data.</div></div>
<div class="t wm" style="left:507px;top:663px;font-family:'Liberation Serif',serif;font-size:17px;line-height:20px;height:20px;color:#e8e8e8;font-variant:small-caps;letter-spacing:0.2px;text-shadow:1px 1px 0 #a8a8a8,0 0 1px #808080">GearDownload.com</div>
</body></html>
